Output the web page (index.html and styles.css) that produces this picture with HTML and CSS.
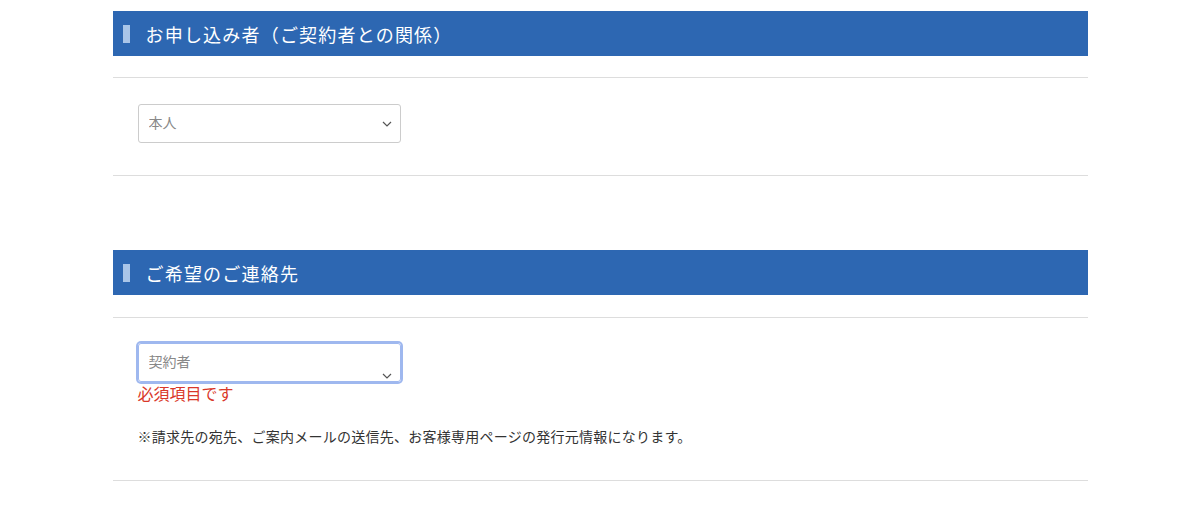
FILE: index.html
```html
<!DOCTYPE html>
<html lang="ja">
<head>
  <meta charset="UTF-8">
  <meta name="viewport" content="width=device-width, initial-scale=1.0">
  <title>お申し込み</title>
  <link rel="stylesheet" href="styles.css">
</head>
<body>
  <div class="container">

    <section class="block">
      <h2 class="block-title">お申し込み者（ご契約者との関係）</h2>
      <div class="block-body">
        <div class="select-wrap">
          <select class="select">
            <option>本人</option>
          </select>
          <svg class="chevron" width="10" height="6" viewBox="0 0 10 6"><path d="M1 1l4 4 4-4" fill="none" stroke="#555" stroke-width="1.2"/></svg>
        </div>
      </div>
    </section>

    <section class="block block-second">
      <h2 class="block-title">ご希望のご連絡先</h2>
      <div class="block-body">
        <div class="select-wrap focused">
          <select class="select top">
            <option>契約者</option>
          </select>
          <svg class="chevron low" width="10" height="6" viewBox="0 0 10 6"><path d="M1 1l4 4 4-4" fill="none" stroke="#555" stroke-width="1.2"/></svg>
        </div>
        <p class="error">必須項目です</p>
        <p class="note">※請求先の宛先、ご案内メールの送信先、お客様専用ページの発行元情報になります。</p>
      </div>
    </section>

  </div>
</body>
</html>
```

FILE: styles.css
```css
body {
  font-family: "Noto Sans CJK JP", "Noto Sans", sans-serif;
  background-color: #fff;
  margin: 0;
  padding: 11px 0 0;
  color: #333;
}
.container {
  width: 975px;
  margin: 0 auto;
}
.block-second {
  margin-top: 74px;
}
.block-title {
  display: flex;
  align-items: center;
  height: 45px;
  margin: 0 0 21px;
  padding: 0 0 0 10px;
  background-color: #2d67b2;
  color: #fff;
  font-size: 18px;
  font-weight: normal;
  letter-spacing: 1.2px;
}
.block-title::before {
  content: "";
  width: 7px;
  height: 18px;
  margin-right: 16px;
  background-color: #a9c5e8;
}
.block-second .block-title {
  margin-bottom: 22px;
}
.block-body {
  border-top: 1px solid #ddd;
  border-bottom: 1px solid #ddd;
  padding: 26px 25px 32px;
}
.block-second .block-body {
  padding-top: 25px;
  padding-bottom: 34px;
}
.select-wrap {
  position: relative;
  width: 263px;
  height: 39px;
  border: 1px solid #ccc;
  border-radius: 3px;
  box-sizing: border-box;
}
.select-wrap.focused {
  border-color: #9fb8ef;
  box-shadow: 0 0 0 2px #9fb8ef;
}
.select {
  appearance: none;
  width: 100%;
  height: 100%;
  border: none;
  background: transparent;
  padding: 0 10px 3px;
  font-family: inherit;
  font-size: 14px;
  color: #888;
  outline: none;
}
.select.top {
  padding-bottom: 4px;
}
.chevron {
  position: absolute;
  right: 8px;
  top: 16px;
}
.chevron.low {
  top: 29px;
}
.error {
  margin: 0;
  color: #d9382a;
  font-size: 16px;
  line-height: 22px;
}
.note {
  margin: 22px 0 0;
  font-size: 14px;
  line-height: 20px;
  letter-spacing: 0.25px;
  color: #333;
}
```
